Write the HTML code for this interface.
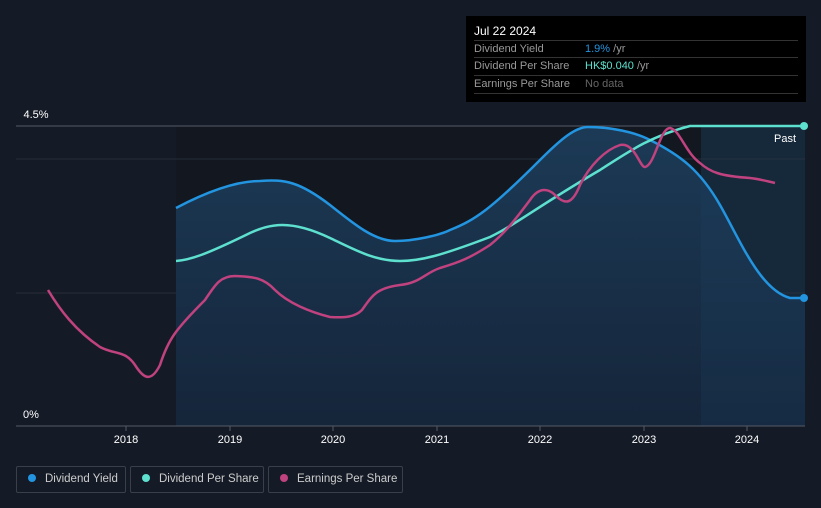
<!DOCTYPE html>
<html><head><style>
body{margin:0;background:#151b26;font-family:"Liberation Sans",sans-serif;width:821px;height:508px;overflow:hidden;position:relative}
.tt{position:absolute;left:466px;top:16px;width:340px;height:86px;background:#000;color:#fff;font-size:11px}
.tt .h{position:absolute;left:8px;top:8px;font-size:12px}
.row{position:absolute;left:8px;width:324px;border-top:1px solid #333;height:17px;line-height:17px;color:#999}
.row span{position:absolute;left:111px}
.leg{position:absolute;top:466px;height:27px;border:1px solid #3a3f4a;border-radius:2px;color:#ccc;font-size:11.5px;line-height:25px;box-sizing:border-box;white-space:nowrap;overflow:hidden}
.leg i{display:inline-block;width:8px;height:8px;border-radius:50%;margin:0 9px 0 11px;vertical-align:0}
</style></head><body>
<svg width="821" height="508" style="position:absolute;left:0;top:0">
<defs><linearGradient id="g" x1="0" y1="0" x2="0" y2="1"><stop offset="0" stop-color="#1c3a56"/><stop offset="1" stop-color="#15253a"/></linearGradient></defs>
<rect x="176" y="126" width="525" height="300" fill="#121720"/>
<rect x="701" y="126" width="104" height="300" fill="#14222f"/>
<line x1="16" y1="159" x2="805" y2="159" stroke="#262c38"/>
<line x1="16" y1="293" x2="805" y2="293" stroke="#262c38"/>
<path d="M176,208 C195,198 230,181 260,181 C285,179 300,182 330,205 C355,225 375,241 395,241 C415,241 440,235 450,230 C475,220 490,210 540,160 C560,140 575,127 588,127 C610,127 635,132 650,140 C680,155 700,170 720,205 C740,240 760,290 790,298 L805,298 L805,426 L176,426 Z" fill="url(#g)"/>
<rect x="701" y="126" width="104" height="300" fill="#1e4868" opacity="0.2"/>
<line x1="16" y1="126" x2="805" y2="126" stroke="#555b66"/>
<line x1="16" y1="426" x2="805" y2="426" stroke="#555b66"/>
<path d="M176,208 C195,198 230,181 260,181 C285,179 300,182 330,205 C355,225 375,241 395,241 C415,241 440,235 450,230 C475,220 490,210 540,160 C560,140 575,127 588,127 C610,127 635,132 650,140 C680,155 700,170 720,205 C740,240 760,290 790,298 L805,298" fill="none" stroke="#2394df" stroke-width="2.5"/>
<path d="M176,261 C190,260 205,255 250,233 C270,224 290,219 330,238 C355,250 375,261 400,261 C420,261 440,256 490,237 C515,225 540,205 600,170 C625,154 650,136 690,126 L805,126" fill="none" stroke="#5ee0cf" stroke-width="2.5"/>
<path d="M48,290 C60,310 75,330 100,347 C115,355 125,350 135,365 C142,376 150,385 160,365 C168,340 175,330 205,300 C215,285 220,276 235,276 C250,277 262,276 275,290 C288,303 310,312 330,317 C345,318 355,317 362,310 C372,296 376,288 400,285 C420,283 425,273 440,268 C460,262 470,258 490,245 C505,233 515,220 530,200 C540,185 550,190 555,195 C565,205 572,205 580,185 C590,165 605,150 620,145 C635,142 640,168 645,167 C655,165 660,128 670,128 C680,130 685,152 700,163 C710,172 720,176 750,178 C760,179 770,182 775,183" fill="none" stroke="#c0427f" stroke-width="2.5"/>
<circle cx="804" cy="126" r="4" fill="#5ee0cf"/>
<circle cx="804" cy="298" r="4" fill="#2394df"/>
<g stroke="#555b66"><line x1="126" y1="426" x2="126" y2="431"/><line x1="230" y1="426" x2="230" y2="431"/><line x1="333" y1="426" x2="333" y2="431"/><line x1="437" y1="426" x2="437" y2="431"/><line x1="540" y1="426" x2="540" y2="431"/><line x1="644" y1="426" x2="644" y2="431"/><line x1="747" y1="426" x2="747" y2="431"/></g>
<g fill="#fff" font-size="11" font-family="Liberation Sans,sans-serif" text-anchor="middle">
<text x="126" y="443">2018</text><text x="230" y="443">2019</text><text x="333" y="443">2020</text><text x="437" y="443">2021</text><text x="540" y="443">2022</text><text x="644" y="443">2023</text><text x="747" y="443">2024</text>
<text x="36" y="118">4.5%</text><text x="31" y="418">0%</text><text x="785" y="142">Past</text></g>
</svg>
<div class="tt"><div class="h">Jul 22 2024</div>
<div class="row" style="top:24px">Dividend Yield<span><b style="font-weight:normal;color:#2394df">1.9%</b> /yr</span></div>
<div class="row" style="top:41px">Dividend Per Share<span><b style="font-weight:normal;color:#5ee0cf">HK$0.040</b> /yr</span></div>
<div class="row" style="top:59px;border-bottom:1px solid #333">Earnings Per Share<span style="color:#666">No data</span></div>
</div>
<div class="leg" style="left:16px;width:110px"><i style="background:#2394df"></i>Dividend Yield</div>
<div class="leg" style="left:130px;width:134px"><i style="background:#5ee0cf"></i>Dividend Per Share</div>
<div class="leg" style="left:268px;width:135px"><i style="background:#c0427f"></i>Earnings Per Share</div>
</body></html>
